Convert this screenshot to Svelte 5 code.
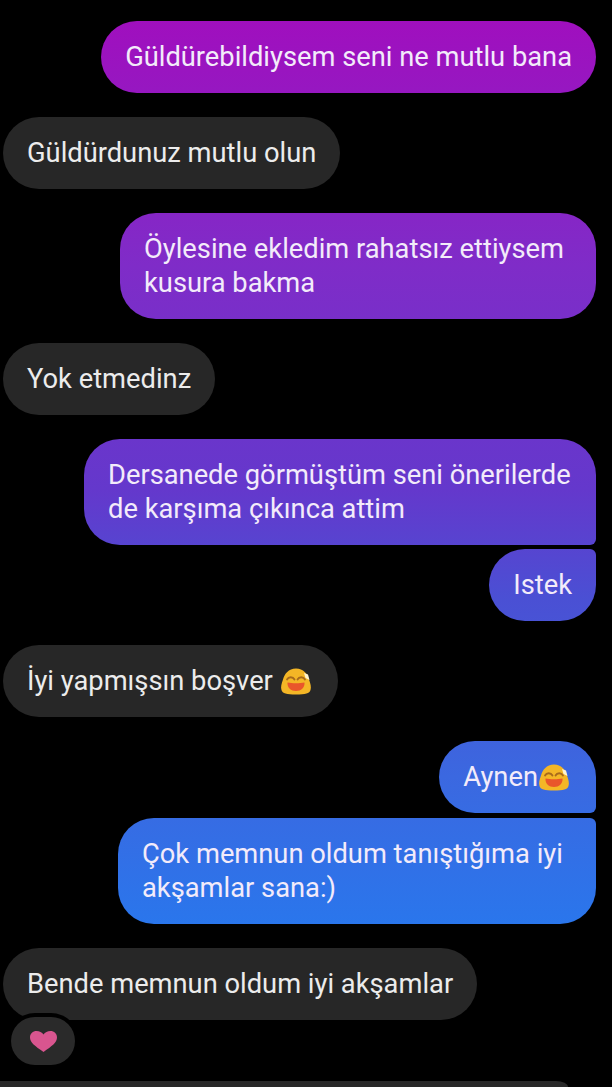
<script>
const messages = [
	{ id: 1, mine: true, text: 'Güldürebildiysem seni ne mutlu bana' },
	{ id: 2, text: 'Güldürdunuz mutlu olun' },
	{ id: 3, mine: true, text: 'Öylesine ekledim rahatsız ettiysem kusura bakma', width: 476 },
	{ id: 4, text: 'Yok etmedinz' },
	{ id: 5, mine: true, text: 'Dersanede görmüştüm seni önerilerde de karşıma çıkınca attim', width: 512, tail: 'bottom' },
	{ id: 6, mine: true, text: 'Istek', tail: 'top', joined: true },
	{ id: 7, text: 'İyi yapmışsın boşver ', emoji: true },
	{ id: 8, mine: true, text: 'Aynen', emoji: true, tail: 'bottom' },
	{ id: 9, mine: true, text: 'Çok memnun oldum tanıştığıma iyi akşamlar sana:)', width: 478, tail: 'top', joined: true, loose: true },
	{ id: 10, text: 'Bende memnun oldum iyi akşamlar' }
];
</script>

<main class="thread">
	{#each messages as m (m.id)}
		<div
			class="bubble"
			class:mine={m.mine}
			class:joined={m.joined}
			class:loose={m.loose}
			class:tail-top={m.tail === 'top'}
			class:tail-bottom={m.tail === 'bottom'}
			style={m.width ? `width: ${m.width}px` : undefined}
		>
			{m.text}{#if m.emoji}<svg class="emoji" viewBox="0 0 31 27" aria-hidden="true">
					<path d="M15.500 0.500C8 0.500 4 6 2.500 11.500 1 16 0 19 1 22c1 3.500 5 4.500 14.500 4.500S29 25.500 30 22c1-3 0-6-1.500-10.500C27 6 23 0.500 15.500 0.500z" fill="#f4b626" />
					<path d="M6.500 11.500c1.500-3 6-3 7.500 0M17 11.500c1.500-3 6-3 7.500 0" fill="none" stroke="#a86a1c" stroke-width="1.800" stroke-linecap="round" />
					<path d="M7 14.500c5 1 12 1 17 0 0.500 5-3.500 8.500-8.500 8.500S6.500 19.500 7 14.500z" fill="#e9562b" />
					<path d="M23.500 5l4 1.500 1.500 5.500-4-2z" fill="#fff3cf" />
				</svg>{/if}
		</div>
	{/each}

	<div class="reaction">
		<svg viewBox="0 0 27 21" aria-hidden="true">
			<path d="M13.500 21C5 15 0 11.500 0 6.500 0 2.500 3 0 6.500 0 9.500 0 12 1.500 13.500 3.500 15 1.500 17.500 0 20.500 0 24 0 27 2.500 27 6.500 27 11.500 22 15 13.500 21z" fill="#d9558f" />
		</svg>
	</div>
</main>

<div class="composer"></div>

<style>
	:global(body) {
		background: #000;
	}

	.thread {
		display: flex;
		flex-direction: column;
		align-items: flex-start;
		padding: 21px 16px 0 3px;
		height: 1081px;
		box-sizing: border-box;
		font-family: Roboto, "Liberation Sans", sans-serif;
		font-size: 27.3px;
		line-height: 34px;
		color: #ececec;
	}

	.bubble {
		box-sizing: border-box;
		padding: 19px 24px;
		margin-top: 24px;
		border-radius: 36px;
		background: #272727;
	}

	.bubble:first-child {
		margin-top: 0;
	}

	.mine {
		align-self: flex-end;
		color: #f3ebfa;
		background: linear-gradient(180deg, #a00fbe 20px, #7f2cc8 266px, #6438cc 490px, #4a50d4 600px, #3b68e0 777px, #2a76ec 924px) fixed;
	}

	.joined {
		margin-top: 4px;
	}

	.loose {
		margin-top: 5px;
	}

	.tail-bottom {
		border-bottom-right-radius: 6px;
	}

	.tail-top {
		border-top-right-radius: 6px;
	}

	.emoji {
		display: inline-block;
		width: 32px;
		height: 27px;
		margin-right: 2px;
		vertical-align: -5px;
	}

	.reaction {
		position: relative;
		display: flex;
		align-items: center;
		justify-content: center;
		width: 64px;
		height: 48px;
		margin: -3px 0 0 8px;
		border-radius: 24px;
		background: #2a2a2a;
		box-shadow: 0 0 0 4px #000;
	}

	.reaction svg {
		width: 27px;
		height: 21px;
	}

	.composer {
		width: 568px;
		height: 6px;
		overflow: hidden;
		border-top-right-radius: 24px 12px;
		background: #282828;
	}
</style>
